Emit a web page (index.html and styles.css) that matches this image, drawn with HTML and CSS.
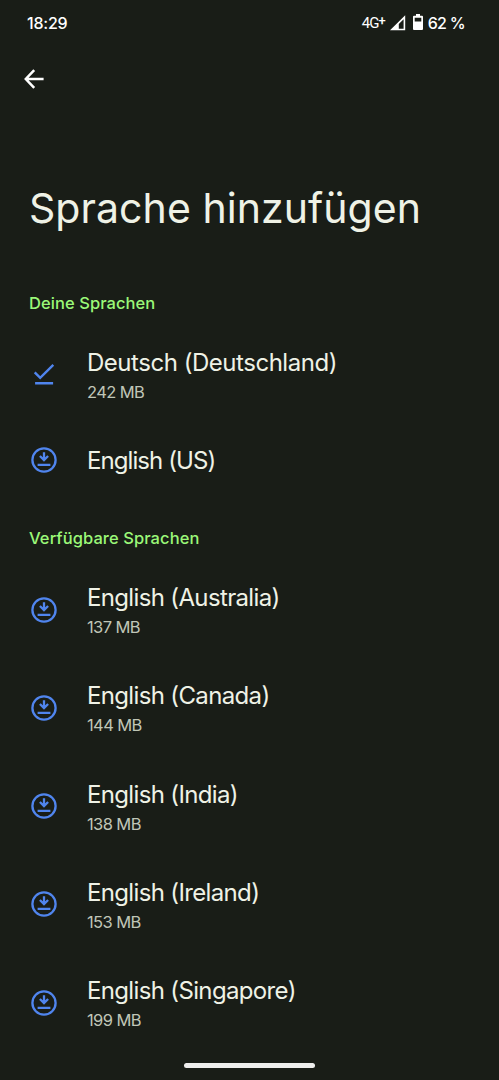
FILE: index.html
```html
<!DOCTYPE html>
<html lang="de">
<head>
<meta charset="utf-8">
<meta name="viewport" content="width=device-width, initial-scale=1">
<title>Sprache hinzufügen</title>
<link rel="stylesheet" href="styles.css">
</head>
<body>
<svg class="defs" aria-hidden="true">
  <symbol id="download" viewBox="0 0 26 26">
    <circle cx="13" cy="13" r="11.6" fill="none" stroke="currentColor" stroke-width="2.300"/>
    <path d="M13 5.200v8M8.900 9l4.100 4.100L17.100 9M6.600 17.900h12.800" fill="none" stroke="currentColor" stroke-width="2.300"/>
  </symbol>
  <symbol id="done" viewBox="0 0 26 26">
    <path d="M3.700 10.300l5.500 5.500L22.300 2.900M4.100 21.200h18" fill="none" stroke="currentColor" stroke-width="2.400"/>
  </symbol>
</svg>
<div class="screen">
  <header class="status">
    <span class="time">18:29</span>
    <div class="indicators">
      <span class="network">4G<span class="plus">+</span></span>
      <svg class="signal" viewBox="0 0 16 16"><path fill="#fff" fill-rule="evenodd" d="M15.200.3v15H0zM13.600 4.300L8.800 9v4.800h4.800z"/></svg>
      <svg class="battery" viewBox="0 0 10 17"><path fill="#fff" fill-rule="evenodd" d="M3 0h4v1.800h2a1 1 0 0 1 1 1V15a1 1 0 0 1-1 1H1a1 1 0 0 1-1-1V2.800a1 1 0 0 1 1-1h2zM1.700 3.700v3.700h6.600V3.700z"/></svg>
      <span class="percent">62 %</span>
    </div>
  </header>
  <nav class="toolbar">
    <svg class="back" viewBox="0 0 20 20"><path d="M19.600 10H2M10.200 1.200L1.800 10l8.400 8.800" fill="none" stroke="#fff" stroke-width="2.500"/></svg>
  </nav>
  <h1 class="title">Sprache hinzufügen</h1>
  <main>
    <h2 class="section first">Deine Sprachen</h2>
    <ul class="list">
      <li class="row"><svg class="icon"><use href="#done"/></svg><div class="label"><span class="name wide">Deutsch (Deutschland)</span><span class="size">242 MB</span></div></li>
      <li class="row single"><svg class="icon"><use href="#download"/></svg><div class="label"><span class="name tight">English (US)</span></div></li>
    </ul>
    <h2 class="section">Verfügbare Sprachen</h2>
    <ul class="list">
      <li class="row"><svg class="icon"><use href="#download"/></svg><div class="label"><span class="name">English (Australia)</span><span class="size">137 MB</span></div></li>
      <li class="row"><svg class="icon"><use href="#download"/></svg><div class="label"><span class="name">English (Canada)</span><span class="size">144 MB</span></div></li>
      <li class="row"><svg class="icon"><use href="#download"/></svg><div class="label"><span class="name">English (India)</span><span class="size">138 MB</span></div></li>
      <li class="row"><svg class="icon"><use href="#download"/></svg><div class="label"><span class="name">English (Ireland)</span><span class="size">153 MB</span></div></li>
      <li class="row"><svg class="icon"><use href="#download"/></svg><div class="label"><span class="name">English (Singapore)</span><span class="size">199 MB</span></div></li>
    </ul>
  </main>
  <div class="home-bar"></div>
</div>
</body>
</html>
```
FILE: styles.css
```css
* { box-sizing: border-box; }
body {
  margin: 0;
  background: #191d17;
  color: #eff2e6;
  font-family: Inter, Roboto, sans-serif;
}
.defs { display: none; }
.screen {
  height: 1080px;
  overflow: hidden;
  display: flex;
  flex-direction: column;
  position: relative;
}
.status {
  height: 45px;
  padding: 0 34px 0 27px;
  display: flex;
  align-items: center;
  justify-content: space-between;
  color: #fff;
  font-size: 16px;
  font-weight: 500;
}
.time { letter-spacing: -0.2px; }
.indicators { display: flex; align-items: center; }
.network {
  font-family: Roboto, sans-serif;
  font-size: 15px;
  font-weight: 400;
  letter-spacing: -1px;
  margin-right: 4px;
}
.plus { font-size: 13px; font-weight: 500; letter-spacing: 0; position: relative; top: -3px; }
.signal { width: 16px; height: 16px; margin-right: 7px; }
.battery { width: 10px; height: 17px; margin-right: 5px; }
.percent { letter-spacing: -0.7px; }
.toolbar { height: 67px; padding: 24px 24px; }
.back { display: block; width: 20px; height: 20px; }
.title {
  margin: 0;
  height: 169px;
  padding: 71px 0 0 29px;
  font-size: 41px;
  line-height: 50px;
  font-weight: 400;
  letter-spacing: 0.06px;
  white-space: nowrap;
}
.section {
  margin: 0;
  height: 63.5px;
  padding: 29px 0 0 29px;
  line-height: 24px;
  color: #9bf878;
  font-size: 16.5px;
  font-weight: 500;
  letter-spacing: 0.07px;
}
.first { height: 44.4px; padding-top: 10px; }
.list { margin: 0; padding: 0; list-style: none; }
.row {
  height: 98.3px;
  padding-left: 31px;
  display: flex;
  align-items: center;
  gap: 30px;
}
.single { height: 73.2px; }
.icon { width: 26px; height: 26px; color: #5085ee; flex: none; }
.label { display: flex; flex-direction: column; padding-top: 3px; }
.single .label { padding-top: 1px; }
.name {
  font-size: 24px;
  line-height: 34px;
  letter-spacing: -0.65px;
  white-space: nowrap;
}
.wide { letter-spacing: -0.47px; }
.tight { letter-spacing: -0.92px; }
.size {
  font-size: 16.5px;
  line-height: 26px;
  letter-spacing: -0.6px;
  color: #c0c6b7;
  margin-top: -1px;
  margin-bottom: 1px;
}
.home-bar {
  position: absolute;
  left: 184px;
  bottom: 12px;
  width: 131px;
  height: 5px;
  border-radius: 3px;
  background: #eeeeed;
}
```
